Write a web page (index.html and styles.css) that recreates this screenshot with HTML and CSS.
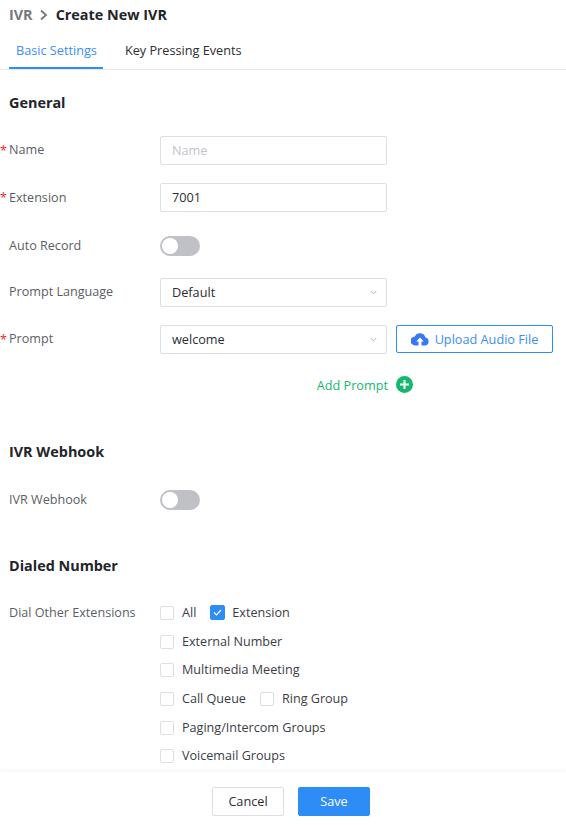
FILE: index.html
```html
<!DOCTYPE html>
<html lang="en">
<head>
    <meta charset="UTF-8">
    <title>Create New IVR</title>
    <link rel="stylesheet" href="styles.css">
</head>
<body>
    <div class="page">
        <div class="content">
            <div class="crumbs">
                <span class="crumb-parent">IVR</span>
                <svg class="crumb-arrow" width="10" height="12" viewBox="0 0 10 12"><path d="M2 1.500 7 6 2 10.500" fill="none" stroke="#77777c" stroke-width="1.800"/></svg>
                <span class="crumb-current">Create New IVR</span>
            </div>

            <div class="tabs">
                <div class="tab active">Basic Settings</div>
                <div class="tab">Key Pressing Events</div>
            </div>

            <h3 class="section general">General</h3>

            <div class="row row-name">
                <label class="required">Name</label>
                <div class="input placeholder">Name</div>
            </div>
            <div class="row row-ext">
                <label class="required">Extension</label>
                <div class="input">7001</div>
            </div>
            <div class="row row-record">
                <label>Auto Record</label>
                <div class="toggle"></div>
            </div>
            <div class="row row-lang">
                <label>Prompt Language</label>
                <div class="input select">Default
                    <svg class="caret" width="7" height="5" viewBox="0 0 8 6"><path d="M.7 1.200 4 4.500 7.300 1.200" fill="none" stroke="#a9abb0" stroke-width="1.100"/></svg>
                </div>
            </div>
            <div class="row row-prompt">
                <label class="required">Prompt</label>
                <div class="input select">welcome
                    <svg class="caret" width="7" height="5" viewBox="0 0 8 6"><path d="M.7 1.200 4 4.500 7.300 1.200" fill="none" stroke="#a9abb0" stroke-width="1.100"/></svg>
                </div>
                <button class="upload">
                    <svg width="18" height="14" viewBox="0 0 18 14"><path d="M14.400 5.600A5.600 5.600 0 0 0 3.800 4.500 4.500 4.500 0 0 0 4.300 13.500H7.500V9.500H5.300L9 5.500l3.700 4H10.500v4h3.500a4 4 0 0 0 .4-7.900Z" fill="#3a78f2"/></svg>
                    Upload Audio File
                </button>
            </div>
            <div class="add-prompt">
                <span>Add Prompt</span>
                <svg width="17" height="17" viewBox="0 0 17 17"><circle cx="8.500" cy="8.500" r="8.500" fill="#14b86e"/><path d="M8.500 4v9M4 8.500h9" stroke="#fff" stroke-width="2"/></svg>
            </div>

            <h3 class="section webhook">IVR Webhook</h3>
            <div class="row row-hook">
                <label>IVR Webhook</label>
                <div class="toggle"></div>
            </div>

            <h3 class="section dialed">Dialed Number</h3>
            <div class="row row-dial">
                <label>Dial Other Extensions</label>
                <div class="checks">
                    <div class="check-line">
                        <span class="check"><i class="box"></i>All</span>
                        <span class="check"><i class="box on"><svg width="9" height="7" viewBox="0 0 9 7"><path d="M1 3.500 3.500 6 8 1" fill="none" stroke="#fff" stroke-width="1.200"/></svg></i>Extension</span>
                    </div>
                    <div class="check-line"><span class="check"><i class="box"></i>External Number</span></div>
                    <div class="check-line"><span class="check"><i class="box"></i>Multimedia Meeting</span></div>
                    <div class="check-line">
                        <span class="check"><i class="box"></i>Call Queue</span>
                        <span class="check"><i class="box"></i>Ring Group</span>
                    </div>
                    <div class="check-line"><span class="check"><i class="box"></i>Paging/Intercom Groups</span></div>
                    <div class="check-line"><span class="check"><i class="box"></i>Voicemail Groups</span></div>
                </div>
            </div>
        </div>

        <div class="footer">
            <button class="btn">Cancel</button>
            <button class="btn primary">Save</button>
        </div>
    </div>
</body>
</html>
```

FILE: styles.css
```css
* { box-sizing: border-box; }
html, body { margin: 0; height: 100%; }
body { font-family: "Open Sans", sans-serif; font-size: 12.700px; color: #2b2d33; background: #fff; overflow: hidden; }
.page { height: 825px; display: flex; flex-direction: column; }
.content { flex: 1; overflow: hidden; }

.crumbs { height: 29px; margin-bottom: 2px; padding-left: 9px; display: flex; align-items: center; gap: 6.500px; font-size: 14.400px; font-weight: 700; line-height: 19px; }
.crumb-parent { color: #77777c; }
.crumb-current { color: #222429; }

.tabs { display: flex; height: 39px; border-bottom: 1px solid #e8e9ec; padding-left: 9px; }
.tab { padding: 10px 7px 0; line-height: 18px; margin-right: 15px; }
.tab.active { color: #3a8ef6; border-bottom: 2px solid #2d8cf6; height: 38px; padding-right: 6px; }

.section { margin: 0; padding-left: 9px; font-size: 14.400px; font-weight: 700; line-height: 19px; color: #222429; }
.general { margin-top: 23px; }
.webhook { margin-top: 49px; }
.dialed { margin-top: 46px; }

.row { display: flex; align-items: center; padding-left: 9px; position: relative; }
.row label { width: 151px; color: #5c5e66; line-height: 18px; font-size: 12.600px; }
.required::before { content: "*"; position: absolute; left: 0; top: 50%; margin-top: -9px; color: #f5222d; }
.row-name { margin-top: 24px; }
.row-ext { margin-top: 18px; }
.row-record { margin-top: 24px; }
.row-lang { margin-top: 22px; }
.row-prompt { margin-top: 18px; }
.row-hook { margin-top: 29px; }
.row-dial { margin-top: 23px; align-items: flex-start; }
.row-name label, .row-lang label, .row-prompt label { margin-bottom: 1px; }

.input { width: 227px; height: 29px; border: 1px solid #dedfe3; border-radius: 2px; padding: 0 11px; line-height: 27px; color: #2b2d33; position: relative; }
.placeholder { color: #c1c3c9; }
.caret { position: absolute; right: 9px; top: 11px; }

.toggle { width: 40px; height: 20px; border-radius: 10px; background: #c0c1c6; position: relative; }
.toggle::after { content: ""; position: absolute; left: 2px; top: 2px; width: 16px; height: 16px; border-radius: 50%; background: #fff; }

.upload { margin-left: 9px; align-self: flex-start; width: 157px; height: 28px; border: 1px solid #2d8cf6; border-radius: 2px; background: #fff; color: #3a8ef6; font: inherit; display: flex; align-items: center; justify-content: center; gap: 6px; padding: 0; }

.add-prompt { margin-top: 22px; display: flex; justify-content: flex-end; align-items: center; gap: 8px; padding-right: 153px; color: #14b86e; height: 17px; }

.checks { display: flex; flex-direction: column; padding-top: 0.600px; }
.check-line { display: flex; height: 28.700px; align-items: center; gap: 14px; }
.check { display: flex; align-items: center; gap: 8px; line-height: 18px; color: #3b3d45; font-size: 12.600px; }
.box { width: 14px; height: 14px; border: 1px solid #dedfe3; border-radius: 2px; background: #fff; display: flex; align-items: center; justify-content: center; }
.box.on { width: 15px; height: 15px; margin-right: -1px; background: #2d8cf6; border-color: #2d8cf6; }
.row-dial label { margin-top: 6px; }

.footer { height: 53px; display: flex; justify-content: center; gap: 14px; padding: 15px 0 0 16px; background: #fff; box-shadow: 0 -2px 4px rgba(0, 0, 0, 0.04); }
.btn { width: 72px; height: 29px; border: 1px solid #dedfe3; border-radius: 2px; background: #fff; color: #2b2d33; font: inherit; padding: 0 0 2px; }
.btn.primary { background: #2d8cf6; border-color: #2d8cf6; color: #fff; }
```
